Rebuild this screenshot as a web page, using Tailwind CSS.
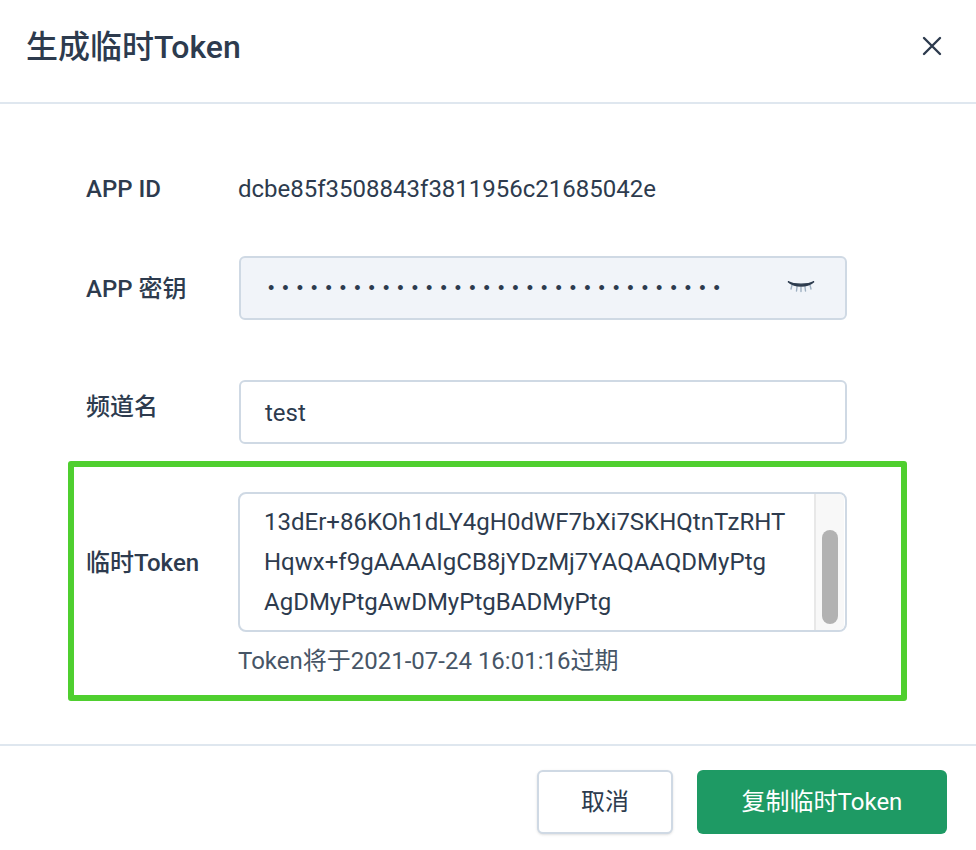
<!DOCTYPE html>
<html lang="zh-CN">
<head>
    <meta charset="UTF-8">
    <title>生成临时Token</title>
    <script src="https://cdn.jsdelivr.net/npm/@tailwindcss/browser@4"></script>
</head>
<body class="bg-white w-[976px] h-[850px] overflow-hidden text-[#2d3b4e] font-['Roboto','Noto_Sans_CJK_SC',sans-serif]">

    <!-- header -->
    <div class="h-[104px] border-b-2 border-[#dfe7ef] pl-[26px] pr-[33px] flex items-center justify-between">
        <h1 class="text-[32px] font-medium leading-[40px] -mt-[8px]">生成临时Token</h1>
        <button class="w-[22px] h-[22px] -mt-[10px] -ml-[1px]">
            <svg viewBox="0 0 22 22" class="w-[22px] h-[22px]" fill="none" stroke="#2d3b4e" stroke-width="2.4" stroke-linecap="round">
                <path d="M3 3 L19 19 M19 3 L3 19"/>
            </svg>
        </button>
    </div>

    <!-- form -->
    <div class="h-[642px] border-b-2 border-[#dfe7ef] pt-[68px] text-[24px]">
        <div class="pl-[86px] h-[32px] flex items-center">
            <label class="w-[152px] font-medium pt-[1px]">APP ID</label>
            <span class="pt-[1px]">dcbe85f3508843f3811956c21685042e</span>
        </div>

        <div class="pl-[86px] mt-[52px] flex items-center">
            <label class="w-[153px] font-medium pt-[1px]">APP 密钥</label>
            <div class="w-[608px] h-[64px] bg-[#f1f4f9] border-2 border-[#cfd9e4] rounded-md flex items-center justify-between pl-[27px] pr-[30px]">
                <span class="tracking-[8.07px] text-[18px] pt-[1px] whitespace-nowrap font-['Liberation_Sans',sans-serif]">••••••••••••••••••••••••••••••••</span>
                <svg viewBox="0 0 28 14" class="w-[28px] h-[14px] shrink-0 -mt-[4px]" fill="none" stroke-linecap="round">
                    <path d="M5 6 L4 10 M10 8 L9.5 12 M14 8.5 L14 12.5 M18 8 L18.5 12 M23 6 L24 10" stroke="#9fb0c2" stroke-width="1.4"/>
                    <path d="M1 2.5 C7 8.5 21 8.5 27 2.5 C21 6 7 6 1 2.5 Z" fill="#2d3b4e" stroke="#2d3b4e" stroke-width="1.4"/>
                </svg>
            </div>
        </div>

        <div class="pl-[86px] mt-[60px] flex items-center">
            <label class="w-[153px] font-medium -mt-[11px]">频道名</label>
            <div class="w-[608px] h-[64px] border-2 border-[#cfd9e4] rounded-md flex items-center pl-[24px] pt-[1px]">test</div>
        </div>

        <!-- token block -->
        <div class="ml-[68px] mt-[17px] w-[839px] h-[240px] border-[6px] border-[#4fcf2f] rounded-[3px] pl-[12px] pt-[25px]">
            <div class="flex items-center">
                <label class="w-[152px] font-medium pt-[1px]">临时Token</label>
                <div class="w-[609px] h-[140px] border-2 border-[#cfd9e4] rounded-lg flex overflow-hidden">
                    <div class="flex-1 pl-[24px] pt-[8px] leading-[40px] whitespace-nowrap overflow-hidden">
                        <div>13dEr+86KOh1dLY4gH0dWF7bXi7SKHQtnTzRHT</div>
                        <div>Hqwx+f9gAAAAIgCB8jYDzMj7YAQAAQDMyPtg</div>
                        <div>AgDMyPtgAwDMyPtgBADMyPtg</div>
                    </div>
                    <div class="w-[30px] mr-[1px] bg-[#f8f8f8] border-l-2 border-[#e8e8e8] flex justify-center pt-[36px]">
                        <div class="w-[16px] h-[94px] bg-[#b2b2b2] rounded-full"></div>
                    </div>
                </div>
            </div>
            <p class="ml-[152px] mt-[13px] leading-[32px] text-[#465566]">Token将于2021-07-24 16:01:16过期</p>
        </div>
    </div>

    <!-- footer -->
    <div class="flex justify-end gap-[24px] pr-[29px] pt-[24px]">
        <button class="w-[136px] h-[64px] bg-white border-2 border-[#cfd9e4] rounded-md shadow-sm text-[24px]">取消</button>
        <button class="w-[250px] h-[64px] bg-[#1e9a64] text-white rounded-md text-[24px]">复制临时Token</button>
    </div>

</body>
</html>
